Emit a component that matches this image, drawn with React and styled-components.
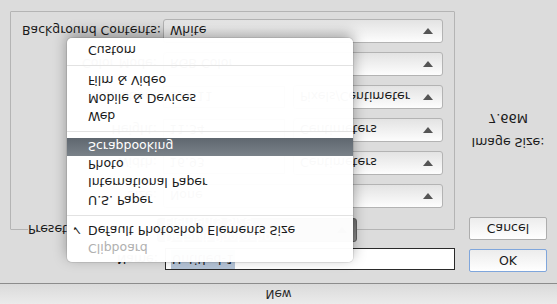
import React from 'react';
import styled, { createGlobalStyle } from 'styled-components';

const GlobalStyle = createGlobalStyle`
  html, body {
    margin: 0;
    padding: 0;
    background: #dcdcdc;
  }
  body {
    font-family: 'DejaVu Sans', 'Liberation Sans', sans-serif;
    font-size: 12.5px;
    color: #1a1a1a;
  }
`;

// the reference shows the dialog mirrored top to bottom, so we build it upright and flip it
const Window = styled.div`
  position: relative;
  width: 557px;
  height: 304px;
  overflow: hidden;
  background: #dcdcdc;
  transform: scaleY(-1);
`;

const TitleBar = styled.div`
  height: 20px;
  border-bottom: 1px solid #8c8c8c;
  background: linear-gradient(#ebebeb, #dadada);
  display: flex;
  align-items: center;
  justify-content: center;
  font-size: 12px;
  color: #2a2a2a;
`;

const Body = styled.div`
  display: flex;
  gap: 14px;
  padding: 11px 0 0 10px;
`;

const LeftColumn = styled.div`
  width: 445px;
  display: flex;
  flex-direction: column;
`;

const NameRow = styled.div`
  display: flex;
  align-items: center;
  gap: 7px;
  height: 23px;
  padding-top: 1px;
`;

const Label = styled.span`
  width: ${p => p.$width || 135}px;
  flex: none;
  text-align: ${p => (p.$left ? 'left' : 'right')};
  white-space: nowrap;
`;

const NameField = styled.div`
  width: 286px;
  height: 20px;
  border: 1px solid #2a2a2a;
  background: #fff;
  display: flex;
  align-items: center;
  padding-left: 5px;
`;

const Selected = styled.span`
  background: #b6c5d8;
  padding: 2px 1px;
`;

const Box = styled.fieldset`
  margin: 6px 0 0 0;
  padding: 10px 11px 7px 11px;
  border: 1px solid #b4b4b4;
  border-radius: 1px;
  min-width: 0;
`;

const Legend = styled.legend`
  display: flex;
  align-items: center;
  padding: 0;
  margin-left: 6px;
  background: #dcdcdc;
`;

const Rows = styled.div`
  display: flex;
  flex-direction: column;
  gap: 9px;
`;

const Row = styled.div`
  display: flex;
  align-items: center;
  gap: 6px;
  height: 24px;
`;

const Select = styled.div`
  width: ${p => p.$width}px;
  height: 24px;
  box-sizing: border-box;
  flex: none;
  display: flex;
  align-items: center;
  justify-content: space-between;
  padding: 0 5px 0 6px;
  border: 1px solid ${p => (p.$pressed ? '#5e5e5e' : '#b3b3b3')};
  border-radius: 3px;
  background: ${p =>
    p.$pressed
      ? 'linear-gradient(#8a8a8a, #6f6f6f)'
      : 'linear-gradient(#fdfdfd, #e3e3e3)'};
  color: ${p => (p.$pressed ? '#fff' : '#1a1a1a')};
`;

const Arrow = styled.span`
  width: 0;
  height: 0;
  margin-right: 4px;
  border-left: 5px solid transparent;
  border-right: 5px solid transparent;
  border-top: 6px solid ${p => (p.$pressed ? '#333' : '#555')};
`;

const Input = styled.div`
  width: 122px;
  height: 22px;
  flex: none;
  box-sizing: border-box;
  border: 1px solid #a9a9a9;
  box-shadow: inset 0 1px 1px rgba(0, 0, 0, 0.15);
  background: #fff;
  display: flex;
  align-items: center;
  padding-left: 5px;
`;

const Pair = styled.div`
  display: flex;
  align-items: center;
  gap: 8px;
`;

const RightColumn = styled.div`
  width: 78px;
  display: flex;
  flex-direction: column;
  align-items: center;
`;

const Button = styled.div`
  width: 78px;
  height: 23px;
  box-sizing: border-box;
  margin-bottom: 9px;
  border: 1px solid ${p => (p.$primary ? '#7fa6dc' : '#adadad')};
  border-radius: 2px;
  background: linear-gradient(#ffffff, #ececec);
  display: flex;
  align-items: center;
  justify-content: center;
  font-size: 12.5px;
`;

const SizeLabel = styled.div`
  margin-top: 58px;
  white-space: nowrap;
`;

const SizeValue = styled.div`
  margin-top: 9px;
  font-size: 13px;
`;

const Menu = styled.div`
  position: absolute;
  left: 67px;
  top: 42px;
  width: 286px;
  padding: 4px 0;
  border-radius: 5px;
  background: rgba(255, 255, 255, 0.975);
  box-shadow: 0 4px 14px rgba(0, 0, 0, 0.35), 0 0 0 1px rgba(0, 0, 0, 0.08);
`;

const Item = styled.div`
  position: relative;
  height: 18px;
  display: flex;
  align-items: center;
  padding-left: 21px;
  white-space: nowrap;
  color: ${p => (p.$disabled ? '#b0b0b0' : p.$active ? '#fff' : '#1a1a1a')};
  background: ${p => (p.$active ? 'linear-gradient(#7a8289, #5f676f)' : 'transparent')};
`;

const Check = styled.span`
  position: absolute;
  left: 5px;
`;

const Separator = styled.div`
  height: 12px;
  display: flex;
  align-items: center;
  &::after {
    content: '';
    flex: 1;
    height: 1px;
    background: #e2e2e2;
  }
`;

const menu = [
  { label: 'Clipboard', disabled: true },
  { label: 'Default Photoshop Elements Size', checked: true },
  'sep',
  { label: 'U.S. Paper' },
  { label: 'International Paper' },
  { label: 'Photo' },
  { label: 'Scrapbooking', active: true },
  'sep',
  { label: 'Web' },
  { label: 'Mobile & Devices' },
  { label: 'Film & Video' },
  'sep',
  { label: 'Custom' },
];

const App = () => (
  <>
    <GlobalStyle />
    <Window>
      <TitleBar>New</TitleBar>
      <Body>
        <LeftColumn>
          <NameRow>
            <Label $width={148}>Name:</Label>
            <NameField><Selected>Untitled-1</Selected></NameField>
          </NameRow>
          <Box>
            <Legend>
              <Label $left $width={129}>Preset:</Label>
              <Select $width={200} $pressed>
                <span>Default Photoshop Elements Size</span>
                <Arrow $pressed />
              </Select>
            </Legend>
            <Rows>
              <Row>
                <Label>Size:</Label>
                <Select $width={280}><span>None</span><Arrow /></Select>
              </Row>
              <Row>
                <Label>Width:</Label>
                <Pair>
                  <Input>16.93</Input>
                  <Select $width={150}><span>Centimeters</span><Arrow /></Select>
                </Pair>
              </Row>
              <Row>
                <Label>Height:</Label>
                <Pair>
                  <Input>11.34</Input>
                  <Select $width={150}><span>Centimeters</span><Arrow /></Select>
                </Pair>
              </Row>
              <Row>
                <Label>Resolution:</Label>
                <Pair>
                  <Input>118.11</Input>
                  <Select $width={150}><span>Pixels/Centimeter</span><Arrow /></Select>
                </Pair>
              </Row>
              <Row>
                <Label>Color Mode:</Label>
                <Select $width={280}><span>RGB Color</span><Arrow /></Select>
              </Row>
              <Row>
                <Label>Background Contents:</Label>
                <Select $width={280}><span>White</span><Arrow /></Select>
              </Row>
            </Rows>
          </Box>
        </LeftColumn>
        <RightColumn>
          <Button $primary>OK</Button>
          <Button>Cancel</Button>
          <SizeLabel>Image Size:</SizeLabel>
          <SizeValue>7.66M</SizeValue>
        </RightColumn>
      </Body>
      <Menu>
        {menu.map((m, i) =>
          m === 'sep' ? (
            <Separator key={i} />
          ) : (
            <Item key={i} $disabled={m.disabled} $active={m.active}>
              {m.checked && <Check>✓</Check>}
              {m.label}
            </Item>
          )
        )}
      </Menu>
    </Window>
  </>
);

export default App;
